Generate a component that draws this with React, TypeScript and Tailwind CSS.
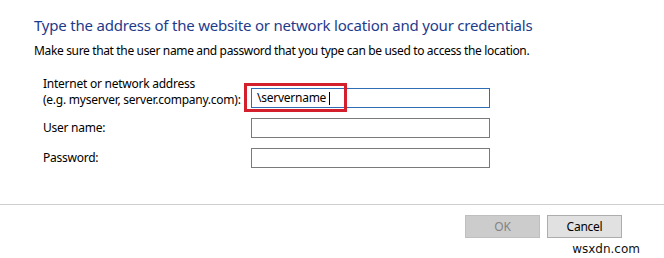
const font = { fontFamily: '"Segoe UI", "Noto Sans", sans-serif' };

function Field({ label, children }: { label: React.ReactNode; children?: React.ReactNode }) {
  return (
    <div className="flex items-center">
      <div className="w-[208px] text-[12px] leading-[16px] text-black">{label}</div>
      <div className="relative w-[239px] h-[20px] border border-[#7a7a7a] bg-white">{children}</div>
    </div>
  );
}

export default function App() {
  return (
    <div
      className="relative w-[664px] h-[258px] bg-white overflow-hidden tracking-[-0.25px]"
      style={font}
    >
      <div className="pl-[34px] pt-[15px]">
        <h1 className="text-[15px] leading-[20px] text-[#1e3b8b] tracking-[-0.2px]">
          Type the address of the website or network location and your credentials
        </h1>
        <p className="mt-[8px] text-[12px] leading-[16px] text-black tracking-[-0.35px]">
          Make sure that the user name and password that you type can be used to access the location.
        </p>
      </div>

      <div className="pl-[43px] mt-[17px] flex flex-col gap-[10px]">
        <div className="flex items-end">
          <div className="w-[208px] text-[12px] leading-[16px] text-black">
            <div>Internet or network address</div>
            <div>(e.g. myserver, server.company.com):</div>
          </div>
          <div className="relative w-[239px] h-[20px] border border-[#2f6db5] bg-white">
            <div className="flex items-center h-full pl-[5px] text-[12px] text-black">
              <span>\servername</span>
              <span className="ml-[3px] w-px h-[13px] bg-black" />
            </div>
            <div className="absolute left-[-8px] top-[-6px] w-[103px] h-[29px] border-[3px] border-[#d4202c]" />
          </div>
        </div>
        <Field label="User name:" />
        <Field label="Password:" />
      </div>

      <div className="mt-[36px] border-t border-[#cfcfcf]" />

      <div className="flex justify-end gap-[7px] pr-[42px] mt-[10px]">
        <button className="w-[75px] h-[23px] border border-[#bfbfbf] bg-[#cccccc] text-[12px] text-[#838383]">
          OK
        </button>
        <button className="w-[75px] h-[23px] border border-[#adadad] bg-[#e1e1e1] text-[12px] text-black">
          Cancel
        </button>
      </div>

      <div
        className="absolute right-[24px] bottom-[2px] text-[12px] leading-[14px] text-[#111] tracking-normal"
        style={{ fontFamily: '"DejaVu Sans", sans-serif' }}
      >
        wsxdn.com
      </div>
    </div>
  );
}
